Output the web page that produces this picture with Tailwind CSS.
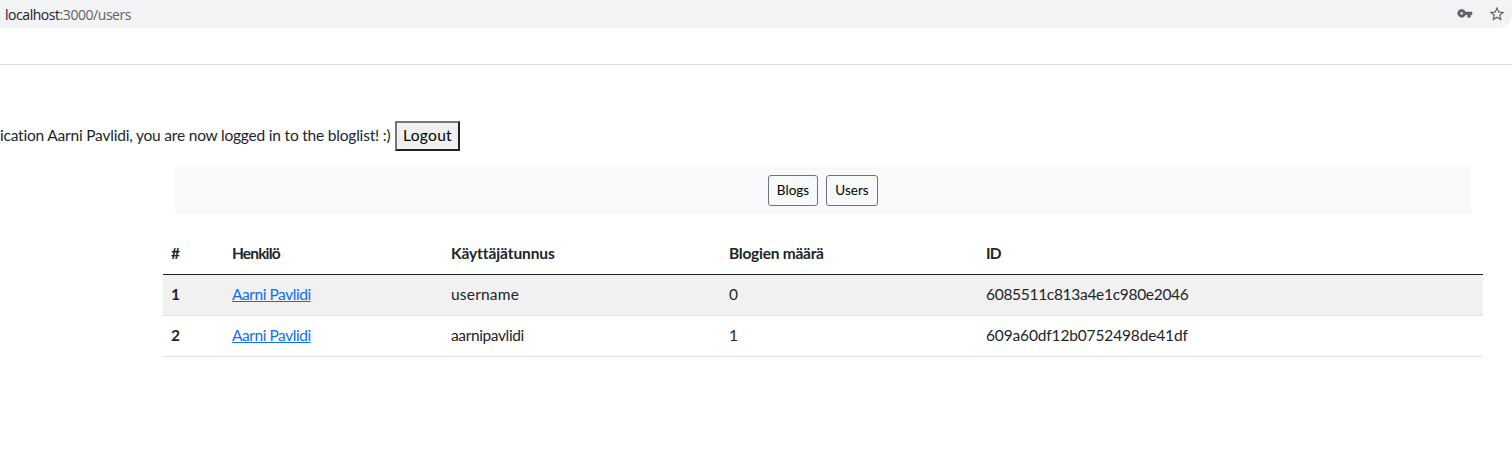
<!DOCTYPE html>
<html lang="fi">
<head>
<meta charset="utf-8">
<title>Bloglist</title>
<script src="https://cdn.jsdelivr.net/npm/@tailwindcss/browser@4"></script>
</head>
<body class="h-[475px] overflow-hidden bg-white font-['Lato',sans-serif] text-[15.5px] leading-6 text-[#212529]">
<header class="h-[65px] border-b border-[#dadce0]">
  <div class="flex h-7 items-center rounded-br-[14px] bg-[#f1f3f4] pl-[5px] pr-[6px]">
    <span class="pt-px font-['Open_Sans',sans-serif] text-[14px] tracking-[-0.45px] text-[#5f6368]"><span class="text-[#202124]">localhost</span>:3000/users</span>
    <svg class="ml-auto h-4 w-4" viewBox="0 0 24 24" fill="#5f6368" stroke="#5f6368" stroke-width="0.8"><path d="M12.65 9A6 6 0 1 0 12.65 13H16v4h4v-4h2.500v-4zM7 13.300a2.300 2.300 0 1 1 0-4.600 2.300 2.300 0 0 1 0 4.600z"/></svg>
    <svg class="ml-[15px] h-[18px] w-[18px]" viewBox="0 0 24 24" fill="#5f6368"><path d="M22 9.24l-7.19-.62L12 2 9.19 8.63 2 9.24l5.46 4.73L5.82 21 12 17.27 18.18 21l-1.63-7.03zM12 15.4l-3.76 2.27 1-4.28-3.32-2.88 4.38-.38L12 6.1l1.71 4.04 4.38.38-3.32 2.88 1 4.28z"/></svg>
  </div>
</header>
<div class="mt-14 flex h-[30px] items-center whitespace-nowrap">
  <span class="-mt-0.5 w-[395px] tracking-[-0.2px]">ication Aarni Pavlidi, you are now logged in to the bloglist! :)</span>
  <button class="h-[30px] w-[65px] border-2 border-t-[#767676] border-l-[#767676] border-r-[#212121] border-b-[#212121] bg-[#efefef] pb-0.5 leading-[22px] tracking-[0.3px] text-black">Logout</button>
</div>
<nav class="mt-4 ml-[175px] flex h-[47px] w-[1296px] items-center justify-center gap-2 bg-[#f8f9fa] text-[13.5px] text-black">
  <button class="h-[31px] w-[50px] rounded-[3px] border border-[#6c757d] pb-0.5">Blogs</button>
  <button class="h-[31px] w-[52px] rounded-[3px] border border-[#6c757d] pb-0.5">Users</button>
</nav>
<table class="mt-[19px] ml-[163px] w-[1320px] table-fixed border-collapse text-left">
  <colgroup><col class="w-[61px]"><col class="w-[219px]"><col class="w-[278px]"><col class="w-[257px]"><col></colgroup>
  <thead><tr class="h-[41px] border-b border-[#212529]">
    <th class="px-2">#</th>
    <th class="px-2 tracking-[-0.85px]">Henkilö</th>
    <th class="px-2 tracking-[-0.1px]">Käyttäjätunnus</th>
    <th class="px-2 tracking-[-0.25px]">Blogien määrä</th>
    <th class="px-2 tracking-[-0.8px]">ID</th>
  </tr></thead>
  <tbody>
  <tr class="h-[41px] border-b border-[#dee2e6] bg-[#f1f1f1]">
    <th class="px-2 pb-0.5">1</th>
    <td class="px-2 pb-0.5"><a class="tracking-[-0.45px] text-[#0d6efd] underline">Aarni Pavlidi</a></td>
    <td class="px-2 pb-0.5 tracking-[0.2px]">username</td>
    <td class="px-2 pb-0.5">0</td>
    <td class="px-2 pb-0.5 tracking-[-0.3px]">6085511c813a4e1c980e2046</td>
  </tr>
  <tr class="h-[41px] border-b border-[#dee2e6]">
    <th class="px-2 pb-0.5">2</th>
    <td class="px-2 pb-0.5"><a class="tracking-[-0.45px] text-[#0d6efd] underline">Aarni Pavlidi</a></td>
    <td class="px-2 pb-0.5 tracking-[-0.38px]">aarnipavlidi</td>
    <td class="px-2 pb-0.5">1</td>
    <td class="px-2 pb-0.5 tracking-[-0.15px]">609a60df12b0752498de41df</td>
  </tr>
  </tbody>
</table>
</body>
</html>
